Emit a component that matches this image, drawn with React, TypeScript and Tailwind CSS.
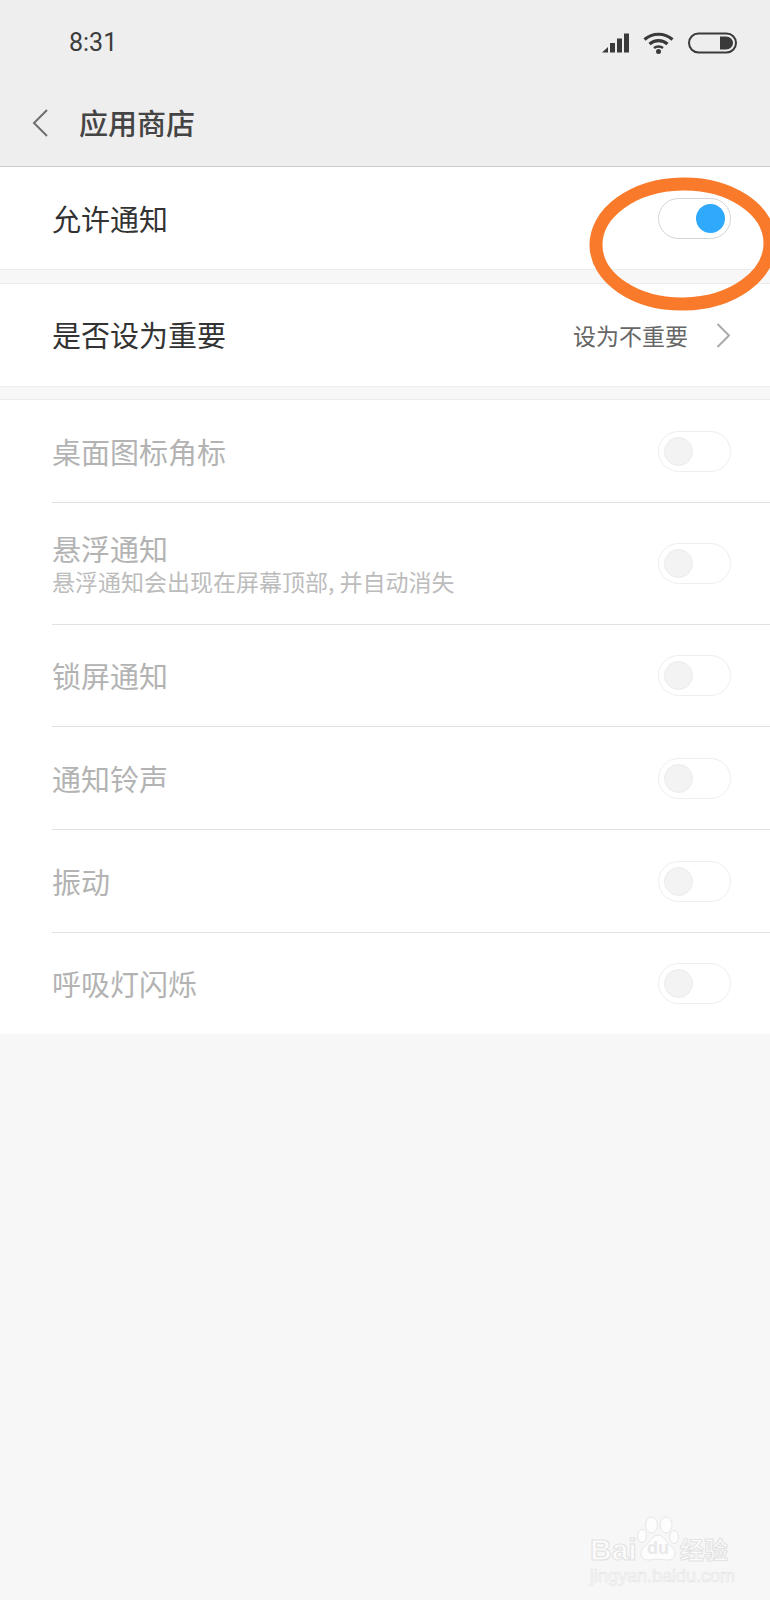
const cjk = "font-['Noto_Sans_CJK_SC','Noto_Sans',sans-serif]";

function Toggle({ on }: { on?: boolean }) {
  if (on) {
    return (
      <div className="flex h-[41px] w-[73px] items-center justify-end rounded-full border border-[#d4d4d4] bg-white pr-[5px]">
        <div className="h-[29px] w-[29px] rounded-full bg-[#2fa9fb]" />
      </div>
    );
  }
  return (
    <div className="flex h-[41px] w-[73px] items-center rounded-full border border-[#eeeeee] bg-white pl-[5px]">
      <div className="h-[29px] w-[29px] rounded-full border border-[#ececec] bg-[#f3f3f3]" />
    </div>
  );
}

function Row({ title, sub, h, last }: { title: string; sub?: string; h: string; last?: boolean }) {
  return (
    <div className={`flex ${h} items-center justify-between pr-[39px] ${last ? "" : "border-b border-[#e2e2e2]"}`}>
      <div className="flex flex-col">
        <span className="text-[29px] leading-[35px] text-[#b3b3b3]">{title}</span>
        {sub && <span className="text-[23px] leading-[31px] text-[#bcbcbc]">{sub}</span>}
      </div>
      <Toggle />
    </div>
  );
}

function Signal() {
  return (
    <svg width="27" height="20" viewBox="0 0 27 20" fill="#3a3a3a">
      <path d="M0 19.5 L6 14 V19.5Z" />
      <rect x="8" y="10" width="5" height="9.5" />
      <rect x="15" y="5.5" width="5" height="14" />
      <rect x="22" y="0.5" width="5" height="19" />
    </svg>
  );
}

function Wifi() {
  return (
    <svg width="31" height="22" viewBox="0 0 31 22" fill="none" stroke="#3a3a3a" strokeWidth="3.2">
      <path d="M1.5 7.5 C9.5 0.5 21.5 0.5 29.5 7.5" />
      <path d="M6.5 12 C11.5 7.5 19.5 7.5 24.5 12" />
      <path d="M11 16 C13.5 14 17.5 14 20 16" strokeWidth="2.6" />
      <circle cx="15.5" cy="19.5" r="2.5" fill="#3a3a3a" stroke="none" />
    </svg>
  );
}

function Battery() {
  return (
    <svg width="49" height="22" viewBox="0 0 49 22">
      <rect x="1" y="1.5" width="47" height="19" rx="9.5" fill="none" stroke="#3a3a3a" strokeWidth="2" />
      <path d="M32 4.5 H38 C42 4.5 45 7.5 45 11 C45 14.5 42 17.5 38 17.5 H32Z" fill="#3a3a3a" />
    </svg>
  );
}

function Watermark() {
  return (
    <div className="absolute left-[590px] top-[1516px] h-[72px] w-[150px]">
      <svg className="absolute left-0 top-0" width="150" height="72" viewBox="0 0 150 72" fill="#fdfdfd" stroke="#e6e6e6" strokeWidth="1">
        <ellipse cx="61.5" cy="9" rx="6" ry="8" />
        <ellipse cx="76" cy="9" rx="6" ry="8" />
        <ellipse cx="52" cy="20" rx="4.5" ry="6.5" />
        <ellipse cx="84" cy="21" rx="4.5" ry="6.5" />
        <path d="M68 19 C74 19 76 27 82 31 C88 36 85 45 76 44 C71 43 65 43 60 44 C51 45 48 36 54 31 C60 27 62 19 68 19Z" />
      </svg>
      <span className="absolute left-0 top-[17px] font-['Liberation_Sans',sans-serif] text-[30px] leading-[34px] font-bold text-[#fbfbfb] [-webkit-text-stroke:1px_#e2e2e2]">Bai</span>
      <span className="absolute left-[57px] top-[22px] font-['Liberation_Sans',sans-serif] text-[18px] leading-[20px] font-bold text-[#e9e9e9]">du</span>
      <span className={`${cjk} absolute left-[90px] top-[18px] text-[24px] leading-[30px] font-bold text-[#fbfbfb] [-webkit-text-stroke:1px_#e2e2e2]`}>经验</span>
      <span className="absolute left-0 top-[50px] font-['Liberation_Sans',sans-serif] text-[18px] leading-[20px] text-[#fafafa] [-webkit-text-stroke:0.6px_#e4e4e4]">jingyan.baidu.com</span>
    </div>
  );
}

export default function App() {
  return (
    <div className={`${cjk} relative h-[1600px] w-[770px] overflow-hidden bg-[#f7f7f7]`}>
      <div className="h-[167px] border-b border-[#c9c9c9] bg-[#eeeeee]">
        <div className="flex h-[83px] items-center justify-between pl-[69px] pr-[33px] pt-[2px]">
          <span className="font-['Roboto',sans-serif] text-[25px] text-[#3c3c3c]">8:31</span>
          <div className="flex items-center gap-[14px]">
            <Signal />
            <Wifi />
            <Battery />
          </div>
        </div>
        <div className="flex h-[80px] items-center pl-[32px]">
          <svg width="16" height="28" viewBox="0 0 16 28" fill="none" stroke="#6f6f6f" strokeWidth="2">
            <path d="M15 1 L2 14 L15 27" />
          </svg>
          <span className="ml-[31px] text-[29px] font-medium text-[#444444]">应用商店</span>
        </div>
      </div>

      <div className="flex h-[102px] items-center justify-between bg-white pl-[52px] pr-[39px] pt-[1px]">
        <span className="text-[29px] text-[#333333]">允许通知</span>
        <Toggle on />
      </div>
      <div className="h-[15px] border-y border-[#ececec] bg-[#f7f7f7]" />
      <div className="flex h-[102px] items-center justify-between bg-white pl-[52px] pr-[39px]">
        <span className="text-[29px] text-[#333333]">是否设为重要</span>
        <div className="flex items-center">
          <span className="text-[23px] text-[#666666]">设为不重要</span>
          <svg className="ml-[28px]" width="15" height="25" viewBox="0 0 15 25" fill="none" stroke="#a9a9a9" strokeWidth="2">
            <path d="M1.5 1 L13 12.5 L1.5 24" />
          </svg>
        </div>
      </div>
      <div className="h-[14px] border-y border-[#ececec] bg-[#f7f7f7]" />

      <div className="bg-white pl-[52px]">
        <Row title="桌面图标角标" h="h-[103px]" />
        <Row title="悬浮通知" sub="悬浮通知会出现在屏幕顶部, 并自动消失" h="h-[122px]" />
        <Row title="锁屏通知" h="h-[102px]" />
        <Row title="通知铃声" h="h-[103px]" />
        <Row title="振动" h="h-[103px]" />
        <Row title="呼吸灯闪烁" h="h-[101px]" last />
      </div>

      {/* hand-drawn annotation over the toggle */}
      <svg className="absolute left-[585px] top-[172px]" width="185" height="144" viewBox="0 0 185 144" fill="none">
        <ellipse cx="98" cy="72" rx="87" ry="60" stroke="#fa7a2b" strokeWidth="13" transform="rotate(-1 98 72)" />
      </svg>

      <Watermark />
    </div>
  );
}
